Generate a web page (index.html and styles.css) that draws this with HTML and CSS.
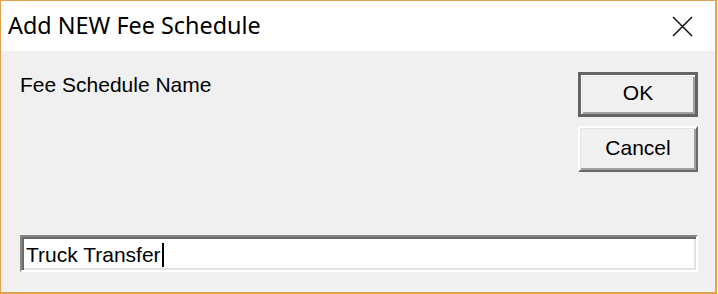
FILE: index.html
```html
<!DOCTYPE html>
<html lang="en">

<head>
  <meta charset="UTF-8">
  <title>Add NEW Fee Schedule</title>
  <link rel="stylesheet" href="styles.css">
</head>

<body>
  <div class="window">
    <div class="titleBar">
      <span class="title">Add NEW Fee Schedule</span>
      <svg class="closeIcon" width="21" height="21" viewBox="0 0 21 21">
        <path d="M1 1 L20 20 M20 1 L1 20" stroke="#111" stroke-width="1.5" fill="none" />
      </svg>
    </div>

    <div class="client">
      <div class="topRow">
        <span class="label">Fee Schedule Name</span>
        <div class="btnCol">
          <div class="btn default">OK</div>
          <div class="btn">Cancel</div>
        </div>
      </div>

      <div class="textBox">
        <span>Truck Transfer</span><span class="caret"></span>
      </div>
    </div>
  </div>
</body>

</html>
```

FILE: styles.css
```css
body {
  margin: 0;
  background-color: #fff;
}

.window {
  width: 717px;
  height: 294px;
  box-sizing: border-box;
  border-style: solid;
  border-color: #e4a24c;
  border-width: 1px 2px 2px 1px;
  display: flex;
  flex-direction: column;
}

.titleBar {
  height: 50px;
  flex-shrink: 0;
  background-color: #fff;
  display: flex;
  align-items: center;
  justify-content: space-between;
  padding: 0 22px 0 7px;
}

.title {
  font-family: "Noto Sans", "Open Sans", sans-serif;
  font-size: 23.4px;
  color: #000;
  padding-bottom: 2px;
}

.client {
  flex: 1;
  background-color: #f0f0f0;
  display: flex;
  flex-direction: column;
  justify-content: space-between;
  padding: 21px 17px 20px 19px;
}

.topRow {
  display: flex;
  justify-content: space-between;
  align-items: flex-start;
}

.label,
.btn,
.textBox {
  font-family: "Liberation Sans", Arial, sans-serif;
  font-size: 21px;
  color: #000;
}

.label {
  margin-top: 1px;
}

.btnCol {
  display: flex;
  flex-direction: column;
  gap: 9px;
}

.btn {
  width: 120px;
  height: 46px;
  box-sizing: border-box;
  display: flex;
  align-items: center;
  justify-content: center;
  padding-bottom: 3px;
  border-style: solid;
  border-width: 2px;
  border-color: #fff #696969 #696969 #fff;
  box-shadow: inset 1px 1px #e3e3e3, inset -2px -2px #a0a0a0;
}

.btn.default {
  height: 45px;
  border: 3px solid #646464;
  box-shadow: inset 1px 1px #fff, inset 2px 2px #e3e3e3, inset -2px -2px #a0a0a0;
}

.textBox {
  height: 37px;
  box-sizing: border-box;
  background-color: #fff;
  border-style: solid;
  border-width: 2px;
  border-color: #878787 #fff #fff #878787;
  box-shadow: inset 2px 2px #6a6a6a, inset -2px -2px #e3e3e3;
  display: flex;
  align-items: center;
  padding-left: 4px;
  padding-top: 2px;
  line-height: 1;
}

.caret {
  display: inline-block;
  width: 2px;
  height: 24px;
  margin-left: 1px;
  background-color: #000;
}
```
